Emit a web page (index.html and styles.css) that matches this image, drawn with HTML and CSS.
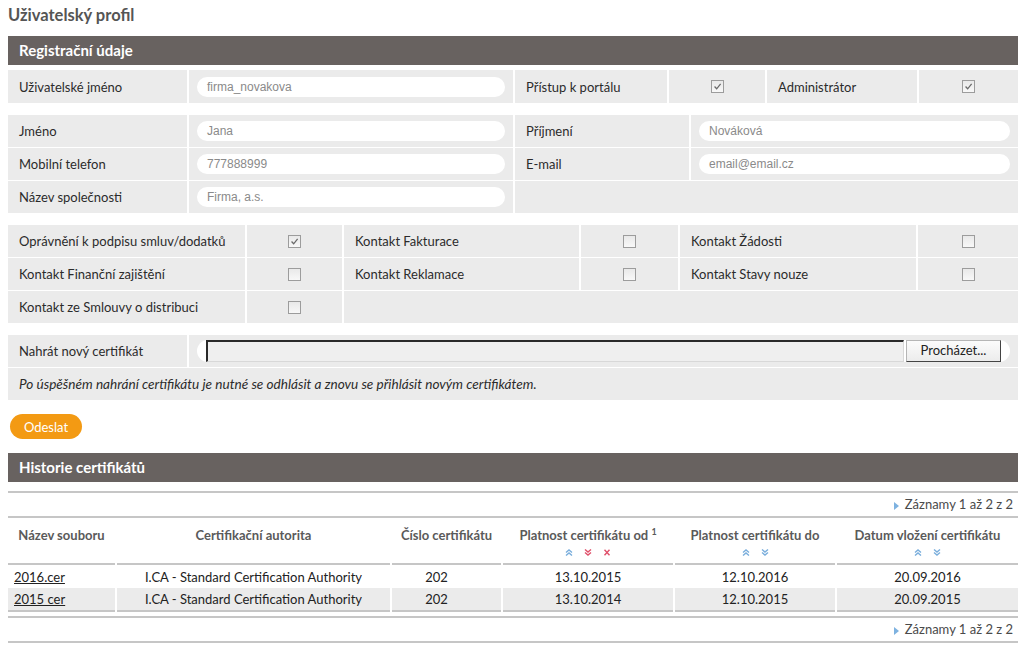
FILE: index.html
```html
<!DOCTYPE html>
<html lang="cs">
<head>
<meta charset="utf-8">
<title>Uživatelský profil</title>
<link rel="stylesheet" href="styles.css">
</head>
<body>
<div class="page">
  <h1 class="page-title">Uživatelský profil</h1>

  <div class="section-head">Registrační údaje</div>

  <div class="form-grid g1">
    <div class="cell label">Uživatelské jméno</div>
    <div class="cell field"><span class="input">firma_novakova</span></div>
    <div class="cell label">Přístup k portálu</div>
    <div class="cell check"><span class="cb"><svg viewBox="0 0 13 13"><path d="M3 6.5 5.5 9.2 10.2 3.4" /></svg></span></div>
    <div class="cell label">Administrátor</div>
    <div class="cell check"><span class="cb"><svg viewBox="0 0 13 13"><path d="M3 6.5 5.5 9.2 10.2 3.4" /></svg></span></div>
  </div>

  <div class="form-grid g2">
    <div class="cell label">Jméno</div>
    <div class="cell field"><span class="input">Jana</span></div>
    <div class="cell label">Příjmení</div>
    <div class="cell field"><span class="input">Nováková</span></div>
    <div class="cell label">Mobilní telefon</div>
    <div class="cell field"><span class="input">777888999</span></div>
    <div class="cell label">E-mail</div>
    <div class="cell field"><span class="input">email@email.cz</span></div>
    <div class="cell label">Název společnosti</div>
    <div class="cell field"><span class="input">Firma, a.s.</span></div>
    <div class="cell span2"></div>
  </div>

  <div class="form-grid g3">
    <div class="cell label">Oprávnění k podpisu smluv/dodatků</div>
    <div class="cell check"><span class="cb"><svg viewBox="0 0 13 13"><path d="M3 6.5 5.5 9.2 10.2 3.4" /></svg></span></div>
    <div class="cell label">Kontakt Fakturace</div>
    <div class="cell check"><span class="cb"></span></div>
    <div class="cell label">Kontakt Žádosti</div>
    <div class="cell check"><span class="cb"></span></div>
    <div class="cell label">Kontakt Finanční zajištění</div>
    <div class="cell check"><span class="cb"></span></div>
    <div class="cell label">Kontakt Reklamace</div>
    <div class="cell check"><span class="cb"></span></div>
    <div class="cell label">Kontakt Stavy nouze</div>
    <div class="cell check"><span class="cb"></span></div>
    <div class="cell label">Kontakt ze Smlouvy o distribuci</div>
    <div class="cell check"><span class="cb"></span></div>
    <div class="cell span4"></div>
  </div>

  <div class="form-grid g4">
    <div class="cell label">Nahrát nový certifikát</div>
    <div class="cell field">
      <div class="file-pill">
        <span class="file-box"></span>
        <span class="file-btn">Procházet...</span>
      </div>
    </div>
    <div class="cell label note">Po úspěšném nahrání certifikátu je nutné se odhlásit a znovu se přihlásit novým certifikátem.</div>
  </div>

  <div class="actions"><button class="btn" type="button">Odeslat</button></div>

  <div class="section-head">Historie certifikátů</div>

  <div class="pager top"><span class="tri"></span>Záznamy 1 až 2 z 2</div>

  <table class="grid">
    <colgroup>
      <col class="c1"><col class="c2"><col class="c3"><col class="c4"><col class="c5"><col class="c6">
    </colgroup>
    <thead>
      <tr>
        <th><div class="th-t">Název souboru</div></th>
        <th><div class="th-t">Certifikační autorita</div></th>
        <th><div class="th-t">Číslo certifikátu</div></th>
        <th>
          <div class="th-t">Platnost certifikátu od <sup>1</sup></div>
          <div class="sorts">
            <svg class="s-up" viewBox="0 0 8 7"><path d="M1 3.5 4 1 7 3.5M1 6.5 4 4 7 6.5"/></svg>
            <svg class="s-down red" viewBox="0 0 8 7"><path d="M1 0.5 4 3 7 0.5M1 3.5 4 6 7 3.5"/></svg>
            <svg class="s-x" viewBox="0 0 8 7"><path d="M1.5 0.8 6.5 6.2M6.5 0.8 1.5 6.2"/></svg>
          </div>
        </th>
        <th>
          <div class="th-t">Platnost certifikátu do</div>
          <div class="sorts">
            <svg class="s-up" viewBox="0 0 8 7"><path d="M1 3.5 4 1 7 3.5M1 6.5 4 4 7 6.5"/></svg>
            <svg class="s-down" viewBox="0 0 8 7"><path d="M1 0.5 4 3 7 0.5M1 3.5 4 6 7 3.5"/></svg>
          </div>
        </th>
        <th>
          <div class="th-t">Datum vložení certifikátu</div>
          <div class="sorts">
            <svg class="s-up" viewBox="0 0 8 7"><path d="M1 3.5 4 1 7 3.5M1 6.5 4 4 7 6.5"/></svg>
            <svg class="s-down" viewBox="0 0 8 7"><path d="M1 0.5 4 3 7 0.5M1 3.5 4 6 7 3.5"/></svg>
          </div>
        </th>
      </tr>
    </thead>
    <tbody>
      <tr>
        <td class="name"><a href="#">2016.cer</a></td>
        <td>I.CA - Standard Certification Authority</td>
        <td class="num">202</td>
        <td>13.10.2015</td>
        <td>12.10.2016</td>
        <td>20.09.2016</td>
      </tr>
      <tr class="alt">
        <td class="name"><a href="#">2015 cer</a></td>
        <td>I.CA - Standard Certification Authority</td>
        <td class="num">202</td>
        <td>13.10.2014</td>
        <td>12.10.2015</td>
        <td>20.09.2015</td>
      </tr>
    </tbody>
  </table>

  <div class="pager bottom"><span class="tri"></span>Záznamy 1 až 2 z 2</div>
</div>
</body>
</html>
```

FILE: styles.css
```css
* { box-sizing: border-box; }

html, body {
  margin: 0;
  padding: 0;
  background: #fff;
}

body {
  font-family: "Lato", "Open Sans", sans-serif;
  font-size: 13px;
  color: #2b2b2b;
}

.page {
  padding: 0 5px 0 8px;
  width: 1023px;
}

.page-title {
  margin: 0;
  height: 36px;
  line-height: 30px;
  font-size: 16.5px;
  font-weight: 700;
  color: #555;
}

.section-head {
  height: 29px;
  line-height: 29px;
  padding-left: 11px;
  background: #686260;
  color: #fff;
  font-size: 15px;
  font-weight: 700;
}

.form-grid {
  display: grid;
  gap: 1px 2px;
  margin-top: 12px;
}

.g1 {
  margin-top: 5px;
  grid-template-columns: 179px 324px 152px 96px 150px 1fr;
  grid-auto-rows: 33px;
}

.g2 {
  grid-template-columns: 179px 324px 174px 1fr;
  grid-auto-rows: 32px;
}

.g3 {
  grid-template-columns: 237px 95px 235px 97px 236px 1fr;
  grid-auto-rows: 32px;
}

.g4 {
  grid-template-columns: 179px 1fr;
  grid-auto-rows: 32px;
}

.cell {
  background: #ebebeb;
  display: flex;
  align-items: center;
}

.label {
  padding-left: 11px;
  color: #2b2b2b;
  white-space: nowrap;
}

.field {
  padding: 0 8px 0 8px;
}

.span2 { grid-column: span 2; }
.span4 { grid-column: span 4; }

.note {
  grid-column: 1 / -1;
  font-style: italic;
  font-size: 13.6px;
}

.input {
  display: block;
  width: 100%;
  height: 20px;
  line-height: 20px;
  background: #fff;
  border-radius: 10px;
  padding-left: 10px;
  font-family: "Liberation Sans", Arial, sans-serif;
  font-size: 12px;
  color: #8a8a8a;
}

.check {
  justify-content: center;
}

.cb {
  display: block;
  width: 13px;
  height: 13px;
  border: 1px solid #9c9c9c;
  background: linear-gradient(#e9e9e9, #f8f8f8);
}

.cb svg {
  display: block;
  width: 11px;
  height: 11px;
}

.cb path {
  fill: none;
  stroke: #6a6a6a;
  stroke-width: 1.5;
}

.file-pill {
  width: 100%;
  height: 22px;
  background: #fff;
  border-radius: 11px;
  display: flex;
  align-items: stretch;
  padding: 0 9px 0 9px;
}

.file-box {
  flex: 1;
  background: #efefef;
  border-top: 2px solid #2a2a2a;
  border-left: 2px solid #2a2a2a;
  border-bottom: 1px solid #d8d8d8;
  border-right: 1px solid #d8d8d8;
}

.file-btn {
  width: 95px;
  margin-left: 2px;
  background: linear-gradient(#fbfbfb, #ececec);
  border: 1px solid #b5b5b5;
  border-right: 1px solid #444;
  border-bottom: 1px solid #444;
  text-align: center;
  line-height: 19px;
  font-size: 13px;
  color: #222;
}

.actions {
  margin-top: 14px;
  height: 39px;
}

.btn {
  display: block;
  margin-left: 2px;
  width: 72px;
  height: 25px;
  border: 0;
  border-radius: 13px;
  background: #f39a13;
  color: #fff;
  font-family: "Lato", sans-serif;
  font-size: 13px;
  padding: 0;
}

.pager {
  border-top: 2px solid #c6c6c6;
  border-bottom: 2px solid #c6c6c6;
  height: 27px;
  line-height: 23px;
  text-align: right;
  padding-right: 5px;
  color: #4a4a4a;
  font-size: 13px;
}

.pager.top { margin-top: 9px; }
.pager.bottom { margin-top: 4px; }

.tri {
  display: inline-block;
  width: 0;
  height: 0;
  border-top: 4px solid transparent;
  border-bottom: 4px solid transparent;
  border-left: 5px solid #7eb2e0;
  margin-right: 6px;
  vertical-align: -1px;
}

.grid {
  width: calc(100% + 4px);
  margin-left: -2px;
  table-layout: fixed;
  border-collapse: separate;
  border-spacing: 2px 0;
}

.c1 { width: 107px; }
.c2 { width: 273px; }
.c3 { width: 109px; }
.c4 { width: 170px; }
.c5 { width: 160px; }
.c6 { width: 181px; }

.grid th {
  vertical-align: top;
  height: 47px;
  padding: 8px 0 0;
  font-weight: 700;
  color: #5a5a5a;
  text-align: center;
  border-bottom: 2px solid #c6c6c6;
  white-space: nowrap;
}

.th-t {
  line-height: 18px;
}

.th-t sup {
  font-size: 9px;
  vertical-align: 5px;
  line-height: 0;
}

.sorts {
  display: flex;
  justify-content: center;
  gap: 11px;
  margin-top: 5px;
  height: 8px;
}

.sorts svg {
  width: 8px;
  height: 7px;
  display: block;
}

.sorts path {
  fill: none;
  stroke: #7aaedc;
  stroke-width: 1.4;
}

.sorts .red path,
.sorts .s-x path {
  stroke: #e0506a;
}

.grid td {
  height: 22px;
  line-height: 22px;
  padding: 0;
  text-align: center;
  color: #222;
  white-space: nowrap;
}

.grid tbody tr:first-child td {
  border-top: 1px solid #fff;
  height: 23px;
}

.grid tr.alt td {
  background: #ebebeb;
  border-bottom: 2px solid #c6c6c6;
  height: 24px;
}

.grid td.name {
  text-align: left;
  padding-left: 6px;
}

.grid td.num {
  padding-right: 20px;
}

.grid a {
  color: #222;
  text-decoration: underline;
}
```
